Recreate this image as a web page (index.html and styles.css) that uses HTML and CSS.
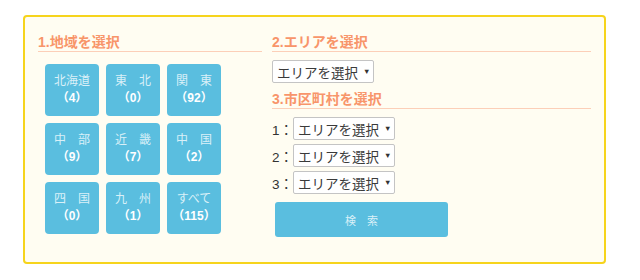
FILE: index.html
```html
<!DOCTYPE html>
<html lang="ja">
<head>
<meta charset="utf-8">
<link rel="stylesheet" href="styles.css">
</head>
<body>
<div class="panel">
  <div class="col-left">
    <h2 class="heading">1.地域を選択</h2>
    <div class="regions">
      <div class="region"><span class="name">北海道</span><span class="count">（4）</span></div>
      <div class="region"><span class="name">東　北</span><span class="count">（0）</span></div>
      <div class="region"><span class="name">関　東</span><span class="count">（92）</span></div>
      <div class="region"><span class="name">中　部</span><span class="count">（9）</span></div>
      <div class="region"><span class="name">近　畿</span><span class="count">（7）</span></div>
      <div class="region"><span class="name">中　国</span><span class="count">（2）</span></div>
      <div class="region"><span class="name">四　国</span><span class="count">（0）</span></div>
      <div class="region"><span class="name">九　州</span><span class="count">（1）</span></div>
      <div class="region"><span class="name">すべて</span><span class="count">（115）</span></div>
    </div>
  </div>
  <div class="col-right">
    <h2 class="heading">2.エリアを選択</h2>
    <div class="select area-select"><span>エリアを選択</span><span class="arrow">▼</span></div>
    <h2 class="heading heading-city">3.市区町村を選択</h2>
    <div class="city-rows">
      <div class="city-row"><span class="num">1：</span><div class="select"><span>エリアを選択</span><span class="arrow">▼</span></div></div>
      <div class="city-row"><span class="num">2：</span><div class="select"><span>エリアを選択</span><span class="arrow">▼</span></div></div>
      <div class="city-row"><span class="num">3：</span><div class="select"><span>エリアを選択</span><span class="arrow">▼</span></div></div>
    </div>
    <div class="search">検　索</div>
  </div>
</div>
</body>
</html>
```
FILE: styles.css
```css
* { box-sizing: border-box; }
body {
  margin: 0;
  background: #ffffff;
  font-family: "Liberation Sans", "Noto Sans CJK JP", sans-serif;
}
.panel {
  margin: 15px 0 0 23px;
  width: 583px;
  height: 249px;
  border: 2px solid #f6d41c;
  border-radius: 4px;
  background: #fffdf2;
  padding: 16px 13px 0 13px;
  display: flex;
  gap: 10px;
}
.col-left { width: 224px; }
.col-right { width: 319px; }
.heading {
  margin: 0;
  font-size: 14px;
  font-weight: bold;
  line-height: 18px;
  height: 19px;
  color: #f8956a;
  border-bottom: 1px solid #fccfb8;
}
.regions {
  margin: 12px 0 0 7px;
  display: grid;
  grid-template-columns: repeat(3, 54px);
  grid-auto-rows: 52px;
  gap: 7px;
}
.region {
  background: #5abedf;
  border-radius: 4px;
  display: flex;
  flex-direction: column;
  align-items: center;
  justify-content: center;
  line-height: 17px;
  font-size: 12px;
}
.region .name { color: #d9f0f8; }
.region .count { color: #ffffff; font-weight: bold; font-size: 12px; }
.select {
  display: inline-flex;
  align-items: center;
  height: 23px;
  width: 102px;
  padding: 0 0 0 4px;
  background: #ffffff;
  border: 1px solid #c4c4c4;
  border-radius: 2px;
  font-size: 13.5px;
  color: #3a3a3a;
  gap: 5px;
}
.arrow { font-size: 7.5px; color: #333; }
.area-select { margin-top: 8px; }
.heading-city { margin-top: 7px; }
.city-rows {
  margin-top: 8px;
  display: flex;
  flex-direction: column;
  gap: 4px;
}
.city-row {
  display: flex;
  align-items: center;
}
.num {
  font-size: 13.5px;
  color: #333;
  white-space: nowrap;
}
.search {
  margin: 8px 0 0 3px;
  width: 173px;
  height: 35px;
  background: #5abedf;
  border-radius: 3px;
  color: #d9f0f8;
  font-size: 11px;
  display: flex;
  align-items: center;
  justify-content: center;
}
```
